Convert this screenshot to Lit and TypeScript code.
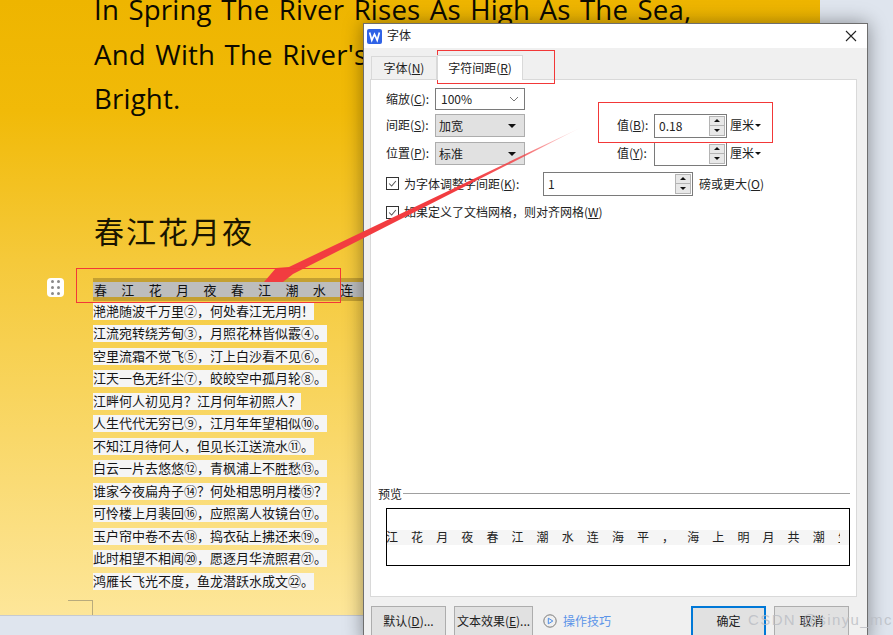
import { LitElement, html, css } from "lit";
import { customElement } from "lit/decorators.js";

const LINES = [
  "滟滟随波千万里②，何处春江无月明！",
  "江流宛转绕芳甸③，月照花林皆似霰④。",
  "空里流霜不觉飞⑤，汀上白沙看不见⑥。",
  "江天一色无纤尘⑦，皎皎空中孤月轮⑧。",
  "江畔何人初见月？江月何年初照人？",
  "人生代代无穷已⑨，江月年年望相似⑩。",
  "不知江月待何人，但见长江送流水⑪。",
  "白云一片去悠悠⑫，青枫浦上不胜愁⑬。",
  "谁家今夜扁舟子⑭？何处相思明月楼⑮？",
  "可怜楼上月裴回⑯，应照离人妆镜台⑰。",
  "玉户帘中卷不去⑱，捣衣砧上拂还来⑲。",
  "此时相望不相闻⑳，愿逐月华流照君㉑。",
  "鸿雁长飞光不度，鱼龙潜跃水成文㉒。",
];

const spin = html`<span class="spin"><b><i class="up"></i></b><b><i class="down"></i></b></span>`;
const check = html`<svg class="chk" viewBox="0 0 13 13"><path d="M2.500 6.500l3 3 5-6" fill="none" stroke="#555" stroke-width="1.200"/></svg>`;

@customElement("app-root")
export class AppRoot extends LitElement {
  static styles = css`
    :host { display: block; width: 893px; height: 635px; position: relative; overflow: hidden; background: #dfe5ee;
      font-family: "Noto Sans CJK SC", sans-serif; color: #111; }
    .paper { width: 820px; height: 616px; box-sizing: border-box; border-bottom: 1px solid #c6cad0;
      background: linear-gradient(#eeb500 0, #f1ba08 110px, #f5c93a 260px, #f8d45c 390px, #fde699 616px);
      padding: 0 0 0 94px; overflow: hidden; position: relative; }
    .en { margin: -13px 0 0; font: 27.600px/44.500px "Open Sans", sans-serif; letter-spacing: 0.200px; word-spacing: 2px; white-space: nowrap; color: #0c0a00; }
    .title { margin: 91px 0 0; font: 400 30px/36px "Noto Sans CJK SC", serif; letter-spacing: 2px; color: #1a1500; }
    .sel { margin: 30px 0 0 -1px; height: 23px; box-sizing: border-box; padding: 4px 0; background: #c4a032; width: 300px; }
    .sel div { height: 15px; background: #bdbdbd; font-size: 13px; line-height: 15px; letter-spacing: 14.350px; white-space: nowrap; overflow: hidden; padding-left: 1px; color: #111; }
    .lines { margin: 0 0 0 -1px; display: flex; flex-direction: column; gap: 5.500px; padding-top: 2px; align-items: flex-start; }
    .lines span { display: block; background: #f5f5f5; height: 17px; font-size: 13px; line-height: 16px; white-space: nowrap; color: #151515; }
    .handle { position: absolute; left: 47px; top: 278px; width: 17px; height: 19px; background: #fff; border-radius: 4px; display: grid; grid-template-columns: 3px 3px; grid-auto-rows: 3px; gap: 3px 3px; justify-content: center; align-content: center; }
    .handle i { background: #8a8a8a; border-radius: 50%; }
    .crop { position: absolute; left: 68px; top: 600px; width: 24px; height: 16px; border-top: 1px solid #b9ab7c; border-right: 1px solid #b9ab7c; }

    .dialog { position: absolute; left: 363px; top: 23px; width: 505px; height: 620px; box-sizing: border-box; background: #f0f0f0; border: 1px solid #6e6e6e;
      box-shadow: 0 0 18px rgba(0,0,0,.4); font-size: 12px; line-height: 14px; color: #222; }
    .tbar { height: 24px; box-sizing: border-box; background: #fff; display: flex; align-items: center; padding: 0 10px 0 3px; gap: 5px; font-size: 12px; }
    .tbar .ttl { margin-top: -2px; }
    .tbar .x { margin-left: auto; }
    .tabs { display: flex; align-items: flex-end; height: 31px; padding-left: 7px; }
    .tab { height: 23px; box-sizing: border-box; width: 66px; display: flex; align-items: center; justify-content: center; background: #f0f0f0; border: 1px solid #d9d9d9; border-bottom: 0; font-size: 12px; padding-bottom: 1px; }
    .tab.on { width: 86px; height: 25px; background: #fff; margin-bottom: -1px; position: relative; z-index: 1; }
    u { text-underline-offset: 1px; }
    .panel { margin-left: 6px; width: 487px; height: 518px; box-sizing: border-box; background: #fff; border: 1px solid #d9d9d9; padding: 8px 0 0 15px; position: relative; display: flex; flex-direction: column; }
    .row { display: flex; align-items: center; height: 23px; margin-bottom: 5px; }
    .r1 { height: 22px; margin-bottom: 4px; }
    .r3 { margin-bottom: 7px; }
    .r4 { margin-bottom: 10px; }
    .r5 { height: 14px; margin: 0; }
    .lab { width: 49px; flex: none; white-space: nowrap; padding-bottom: 1px; }
    .chktxt { width: 130px; flex: none; white-space: nowrap; }
    .sel-box { width: 90px; height: 100%; box-sizing: border-box; border: 1px solid #7a7a7a; background: #fff; display: flex; align-items: center; padding: 0 5px; justify-content: space-between; font-size: 12px; flex: none; }
    .sel-box.g { background: #e1e1e1; border-color: #adadad; padding: 0 3px; }
    .tri { width: 0; height: 0; border: 4px solid transparent; border-top: 4px solid #111; border-bottom: 0; margin-right: 5px; }
    .val { margin-left: 92px; width: 37px; flex: none; white-space: nowrap; padding-bottom: 1px; }
    .field { width: 73px; height: 24px; box-sizing: border-box; border: 1px solid #7a7a7a; background: #fff; display: flex; align-items: center; padding: 0 1px 0 4px; flex: none; font-size: 12px; }
    .spin { width: 16px; height: 20px; margin-left: auto; border: 1px solid #b4b4b4; background: #b4b4b4; box-sizing: border-box; display: flex; flex-direction: column; gap: 1px; flex: none; }
    .spin b { flex: 1; background: #e8e8e8; display: flex; align-items: center; justify-content: center; }
    .spin i { width: 0; height: 0; border: 3px solid transparent; }
    .spin .up { border-bottom-color: #111; border-top: 0; }
    .spin .down { border-top-color: #111; border-bottom: 0; }
    .unit { margin-left: 3px; white-space: nowrap; display: flex; align-items: center; gap: 1px; padding-bottom: 1px; }
    .unit .t2 { border: 3px solid transparent; border-top: 3px solid #111; border-bottom: 0; width: 0; height: 0; }
    .chk { width: 13px; height: 13px; box-sizing: border-box; border: 1px solid #333; flex: none; display: block; background: #fff; margin-right: 5px; }
    .field.wide { width: 150px; margin-left: 9px; margin-right: 6px; }
    .preview-h { margin-top: auto; display: flex; align-items: center; margin-left: -8px; gap: 1px; width: 472px; height: 16px; }
    .preview-h span { padding-top: 2px; }
    .preview-h hr { flex: 1; border: 0; border-top: 1px solid #a0a0a0; margin: 0; }
    .pbox { width: 464px; height: 58px; box-sizing: border-box; border: 1px solid #000; margin: 7px 0 30px 0; display: flex; align-items: center; }
    .pbox .band { width: 100%; height: 15px; background: #f5f5f5; }
    .pbox .txt { display: block; width: 453px; height: 15px; font-size: 12px; line-height: 14px; letter-spacing: 13.100px; white-space: nowrap; overflow: hidden; text-indent: -1px; }
    .foot { display: flex; padding: 9px 0 0 7px; align-items: flex-start; }
    .btn { width: 75px; height: 32px; box-sizing: border-box; border: 1px solid #adadad; background: #e1e1e1; display: flex; align-items: center; justify-content: center; font-size: 12px; white-space: nowrap; flex: none; margin-right: 8px; padding-bottom: 2px; }
    .btn.w { width: 79px; margin-right: 10px; }
    .btn.ok { border: 2px solid #0078d7; }
    .tips { display: flex; align-items: center; gap: 6px; color: #5b94e8; font-size: 12px; width: 148px; flex: none; height: 29px; }

    .mark { position: absolute; box-sizing: border-box; border: 1px solid #f23838; pointer-events: none; }
    .m1 { left: 437px; top: 50px; width: 118px; height: 34px; }
    .m2 { left: 598px; top: 102px; width: 175px; height: 41px; }
    .m3 { left: 76px; top: 268px; width: 265px; height: 35px; }
    .arrow { position: absolute; left: 0; top: 0; pointer-events: none; }
    .wm { position: absolute; left: 748px; top: 608px; font: 15px/24px "Liberation Sans", sans-serif; letter-spacing: 1.400px; color: rgba(185,188,195,.8); white-space: nowrap; }
  `;

  render() {
    return html`
      <div class="paper">
        <p class="en">In Spring The River Rises As High As The Sea,<br />And With The River's Tide Uprises The Moon So<br />Bright.</p>
        <h1 class="title">春江花月夜</h1>
        <div class="sel"><div>春江花月夜春江潮水连海平，海上明月共潮生</div></div>
        <div class="lines">${LINES.map((l) => html`<span>${l}</span>`)}</div>
        <div class="crop"></div>
      </div>
      <div class="handle">${[0, 1, 2, 3, 4, 5].map(() => html`<i></i>`)}</div>

      <div class="dialog">
        <div class="tbar">
          <svg width="15" height="15" viewBox="0 0 15 15"><rect width="15" height="15" rx="2" fill="#2f62e6"/><path d="M2.600 3.600l2.200 7.600 2.700-6 2.700 6 2.200-7.600" fill="none" stroke="#fff" stroke-width="1.700"/></svg>
          <span class="ttl">字体</span>
          <svg class="x" width="12" height="12" viewBox="0 0 12 12"><path d="M1 1l10 10M11 1L1 11" stroke="#222" stroke-width="1.100"/></svg>
        </div>
        <div class="tabs">
          <div class="tab">字体(<u>N</u>)</div>
          <div class="tab on">字符间距(<u>R</u>)</div>
        </div>
        <div class="panel">
          <div class="row r1">
            <span class="lab">缩放(<u>C</u>):</span>
            <span class="sel-box">100%<svg width="10" height="6" viewBox="0 0 10 6"><path d="M1 1l4 4 4-4" fill="none" stroke="#777" stroke-width="1"/></svg></span>
          </div>
          <div class="row">
            <span class="lab">间距(<u>S</u>):</span>
            <span class="sel-box g">加宽<span class="tri"></span></span>
            <span class="val">值(<u>B</u>):</span>
            <span class="field">0.18${spin}</span>
            <span class="unit">厘米<span class="t2"></span></span>
          </div>
          <div class="row r3">
            <span class="lab">位置(<u>P</u>):</span>
            <span class="sel-box g">标准<span class="tri"></span></span>
            <span class="val">值(<u>Y</u>):</span>
            <span class="field">${spin}</span>
            <span class="unit">厘米<span class="t2"></span></span>
          </div>
          <div class="row r4">
            ${check}
            <span class="chktxt">为字体调整字间距(<u>K</u>):</span>
            <span class="field wide">1${spin}</span>
            <span>磅或更大(<u>O</u>)</span>
          </div>
          <div class="row r5">
            ${check}
            <span>如果定义了文档网格，则对齐网格(<u>W</u>)</span>
          </div>
          <div class="preview-h"><span>预览</span><hr /></div>
          <div class="pbox"><div class="band"><span class="txt">江花月夜春江潮水连海平，海上明月共潮生</span></div></div>
        </div>
        <div class="foot">
          <span class="btn">默认(<u>D</u>)...</span>
          <span class="btn w">文本效果(<u>E</u>)...</span>
          <span class="tips">
            <svg width="14" height="14" viewBox="0 0 14 14"><circle cx="7" cy="7" r="6.200" fill="none" stroke="#7a7a7a"/><path d="M5.300 4.200L9.800 7l-4.500 2.800z" fill="none" stroke="#4a8de8"/></svg>
            操作技巧
          </span>
          <span class="btn ok">确定</span>
          <span class="btn">取消</span>
        </div>
      </div>

      <svg class="arrow" width="893" height="635" viewBox="0 0 893 635">
        <defs><linearGradient id="ag" x1="582" y1="127" x2="470" y2="182" gradientUnits="userSpaceOnUse"><stop offset="0" stop-color="#f23c40" stop-opacity="0"/><stop offset=".5" stop-color="#f23c40" stop-opacity=".75"/><stop offset="1" stop-color="#f23c40"/></linearGradient></defs>
        <path d="M582 127L289 267L276 268L264 282L283 282L293 274z" fill="url(#ag)"/>
      </svg>
      <div class="mark m1"></div>
      <div class="mark m2"></div>
      <div class="mark m3"></div>
      <div class="wm">CSDN @sinyu_mc</div>
    `;
  }
}
